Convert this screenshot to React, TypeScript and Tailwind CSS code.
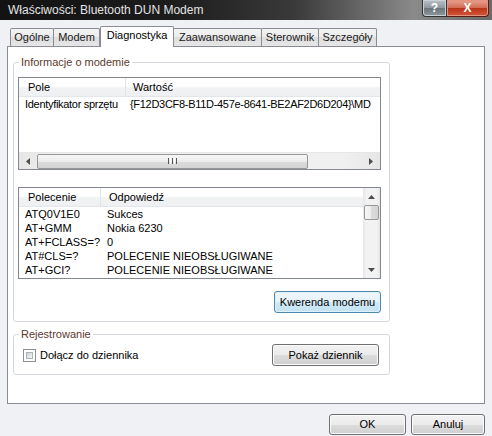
import React from 'react';

const TABS = [
  { label: 'Ogólne', w: 'w-[44px]' },
  { label: 'Modem', w: 'w-[47px]' },
  { label: 'Diagnostyka', w: 'w-[74px]', active: true },
  { label: 'Zaawansowane', w: 'w-[89px]' },
  { label: 'Sterownik', w: 'w-[58px]' },
  { label: 'Szczegóły', w: 'w-[59px]' },
];

const COMMANDS = [
  ['ATQ0V1E0', 'Sukces'],
  ['AT+GMM', 'Nokia 6230'],
  ['AT+FCLASS=?', '0'],
  ['AT#CLS=?', 'POLECENIE NIEOBSŁUGIWANE'],
  ['AT+GCI?', 'POLECENIE NIEOBSŁUGIWANE'],
];

const Button = ({ label, className = '', focused = false }: { label: string; className?: string; focused?: boolean }) => (
  <div
    className={`flex items-center justify-center rounded-[3px] border text-[11px] text-black ${
      focused
        ? 'border-[#4f86ab] bg-[linear-gradient(#f1f8fc_0%,#e4f2fa_50%,#d1eaf7_50%,#c3e2f2_100%)] shadow-[inset_0_0_0_1px_#dff1fb]'
        : 'border-[#707070] bg-[linear-gradient(#f2f2f2_0%,#ebebeb_50%,#dddddd_50%,#cfcfcf_100%)] shadow-[inset_0_0_0_1px_#fbfbfb]'
    } ${className}`}
  >
    {label}
  </div>
);

const Arrow = ({ dir }: { dir: 'left' | 'right' | 'up' | 'down' }) => {
  const pts = {
    left: '5,0 5,7 1,3.5',
    right: '1,0 1,7 5,3.5',
    up: '0,5 7,5 3.5,1',
    down: '0,1 7,1 3.5,5',
  }[dir];
  const horiz = dir === 'left' || dir === 'right';
  return (
    <svg width={horiz ? 6 : 7} height={horiz ? 7 : 6} viewBox={horiz ? '0 0 6 7' : '0 0 7 6'}>
      <polygon points={pts} fill="#4d4d4d" />
    </svg>
  );
};

const Header = ({ cols }: { cols: { label: string; w: string; pl: string }[] }) => (
  <div className="flex h-[19px] shrink-0 border-b border-[#e3e6ea] bg-[linear-gradient(#ffffff_0%,#ffffff_45%,#f1f2f4_55%,#eff0f2_100%)]">
    {cols.map((c) => (
      <div key={c.label} className={`flex items-center border-r border-[#e2e4e8] ${c.w} ${c.pl}`}>
        {c.label}
      </div>
    ))}
  </div>
);

const GroupBox = ({ title, children }: { title: string; children: React.ReactNode }) => (
  <fieldset className="w-[377px] rounded-[3px] border border-[#d5d9de]">
    <legend className="ml-[5px] px-[2px] leading-[13px] text-[#5b3a2e]">{title}</legend>
    {children}
  </fieldset>
);

export default function App() {
  return (
    <div className="flex h-[436px] w-[492px] flex-col overflow-hidden bg-[#eff1f4] font-['Liberation_Sans',Arial,sans-serif] text-[11px] text-black">
      {/* Title bar */}
      <div className="flex h-[20px] shrink-0 items-start bg-[linear-gradient(90deg,#121212_0%,#1c1c1c_35%,#3a3a3a_60%,#8a8a8a_84%,#6a6a6a_100%)]">
        <span className="ml-[8px] mt-[3px] text-[12px] leading-[14px] text-[#e4e4e4]">Właściwości: Bluetooth DUN Modem</span>
        <div className="ml-auto mr-[3px] flex">
          <div className="flex h-[17px] w-[25px] items-center justify-center rounded-bl-[4px] border border-t-0 border-[#2f3336] bg-[linear-gradient(#b9c2c8_0%,#8e979d_50%,#6a7378_50%,#8f989d_100%)] text-[12px] font-bold leading-none text-white shadow-[inset_0_0_0_1px_#c9d0d4]">
            ?
          </div>
          <div className="flex h-[17px] w-[42px] items-center justify-center rounded-br-[4px] border border-l-0 border-t-0 border-[#5a1d12] bg-[linear-gradient(#e8a493_0%,#d26a52_50%,#b93216_50%,#d4563a_100%)] text-[12px] font-bold leading-none text-white shadow-[inset_0_0_0_1px_#e5937f]">
            X
          </div>
        </div>
      </div>

      <div className="flex flex-1 flex-col px-[7px]">
        {/* Tabs */}
        <div className="mt-[6px] flex h-[20px] items-end pl-[3px]">
          {TABS.map((t) =>
            t.active ? (
              <div
                key={t.label}
                className={`relative z-10 -mb-px flex h-[21px] items-center justify-center rounded-t-[2px] border border-b-0 border-[#898c95] bg-white pb-[3px] ${t.w}`}
              >
                {t.label}
              </div>
            ) : (
              <div
                key={t.label}
                className={`-ml-px flex h-[18px] items-center justify-center rounded-t-[2px] border border-b-0 border-[#898c95] bg-[linear-gradient(#f3f3f3_0%,#ebebeb_50%,#dedede_50%,#e6e6e6_100%)] text-[#1a1a1a] first:ml-0 ${t.w}`}
              >
                {t.label}
              </div>
            )
          )}
        </div>

        {/* Panel */}
        <div className="flex h-[358px] flex-col border border-[#898c95] bg-white pl-[5px] pt-[9px]">
          <GroupBox title="Informacje o modemie">
            <div className="flex flex-col pb-[8px] pl-[4px] pt-[8px]">
              {/* List 1 */}
              <div className="flex h-[93px] w-[363px] flex-col border border-[#828790]">
                <Header
                  cols={[
                    { label: 'Pole', w: 'w-[107px]', pl: 'pl-[9px]' },
                    { label: 'Wartość', w: 'flex-1 border-r-0', pl: 'pl-[7px]' },
                  ]}
                />
                <div className="flex h-[14px] items-center overflow-hidden whitespace-nowrap tracking-[-0.3px]">
                  <span className="w-[107px] shrink-0 pl-[6px]">Identyfikator sprzętu</span>
                  <span className="pl-[4px]">{'{F12D3CF8-B11D-457e-8641-BE2AF2D6D204}\\MD'}</span>
                </div>
                <div className="flex-1" />
                <div className="flex h-[17px] items-center border-t border-[#e6e6e6] bg-[linear-gradient(90deg,#e6e6e6,#f0f0f0_10%,#f0f0f0_90%,#e6e6e6)]">
                  <div className="flex w-[18px] justify-center">
                    <Arrow dir="left" />
                  </div>
                  <div className="flex h-[15px] w-[271px] items-center justify-center gap-[1px] rounded-[2px] border border-[#979797] bg-[linear-gradient(#f6f6f6_0%,#ececec_50%,#dcdcdc_50%,#d4d4d4_100%)]">
                    <span className="h-[6px] w-[1px] bg-[#555]" />
                    <span className="h-[6px] w-[1px] bg-white" />
                    <span className="h-[6px] w-[1px] bg-[#555]" />
                    <span className="h-[6px] w-[1px] bg-white" />
                    <span className="h-[6px] w-[1px] bg-[#555]" />
                  </div>
                  <div className="flex-1" />
                  <div className="flex w-[18px] justify-center">
                    <Arrow dir="right" />
                  </div>
                </div>
              </div>

              {/* List 2 */}
              <div className="mt-[17px] flex h-[92px] w-[363px] border border-[#828790]">
                <div className="flex flex-1 flex-col">
                  <Header
                    cols={[
                      { label: 'Polecenie', w: 'w-[82px]', pl: 'pl-[9px]' },
                      { label: 'Odpowiedź', w: 'flex-1 border-r-0', pl: 'pl-[8px]' },
                    ]}
                  />
                  {COMMANDS.map(([cmd, resp]) => (
                    <div key={cmd} className="flex h-[14px] items-center whitespace-nowrap">
                      <span className="w-[82px] shrink-0 pl-[6px]">{cmd}</span>
                      <span className="pl-[6px]">{resp}</span>
                    </div>
                  ))}
                </div>
                <div className="flex w-[17px] flex-col items-center bg-[linear-gradient(90deg,#e6e6e6,#f2f2f2_20%,#f2f2f2_80%,#e6e6e6)]">
                  <div className="flex h-[17px] items-center">
                    <Arrow dir="up" />
                  </div>
                  <div className="h-[15px] w-[15px] rounded-[2px] border border-[#979797] bg-[linear-gradient(90deg,#f6f6f6_0%,#ececec_50%,#dcdcdc_50%,#d4d4d4_100%)]" />
                  <div className="flex-1" />
                  <div className="flex h-[17px] items-center">
                    <Arrow dir="down" />
                  </div>
                </div>
              </div>

              <div className="mt-[12px] flex w-[363px] justify-end">
                <Button label="Kwerenda modemu" focused className="h-[22px] w-[107px]" />
              </div>
            </div>
          </GroupBox>

          <div className="h-[6px]" />

          <GroupBox title="Rejestrowanie">
            <div className="flex items-center pb-[8px] pl-[9px] pt-[3px]">
              <div className="h-[13px] w-[13px] border border-[#8e8f8f] bg-white p-[2px]">
                <div className="h-full w-full border border-[#aeb3b9] bg-[linear-gradient(135deg,#cbcfd5,#f6f6f6)]" />
              </div>
              <span className="ml-[4px]">Dołącz do dziennika</span>
              <div className="flex-1" />
              <Button label="Pokaż dziennik" className="mr-[10px] h-[22px] w-[107px]" />
            </div>
          </GroupBox>
        </div>

        {/* Bottom buttons */}
        <div className="mt-[10px] flex justify-end gap-[5px]">
          <Button label="OK" className="h-[21px] w-[77px]" />
          <Button label="Anuluj" className="h-[21px] w-[74px]" />
        </div>
      </div>
    </div>
  );
}
